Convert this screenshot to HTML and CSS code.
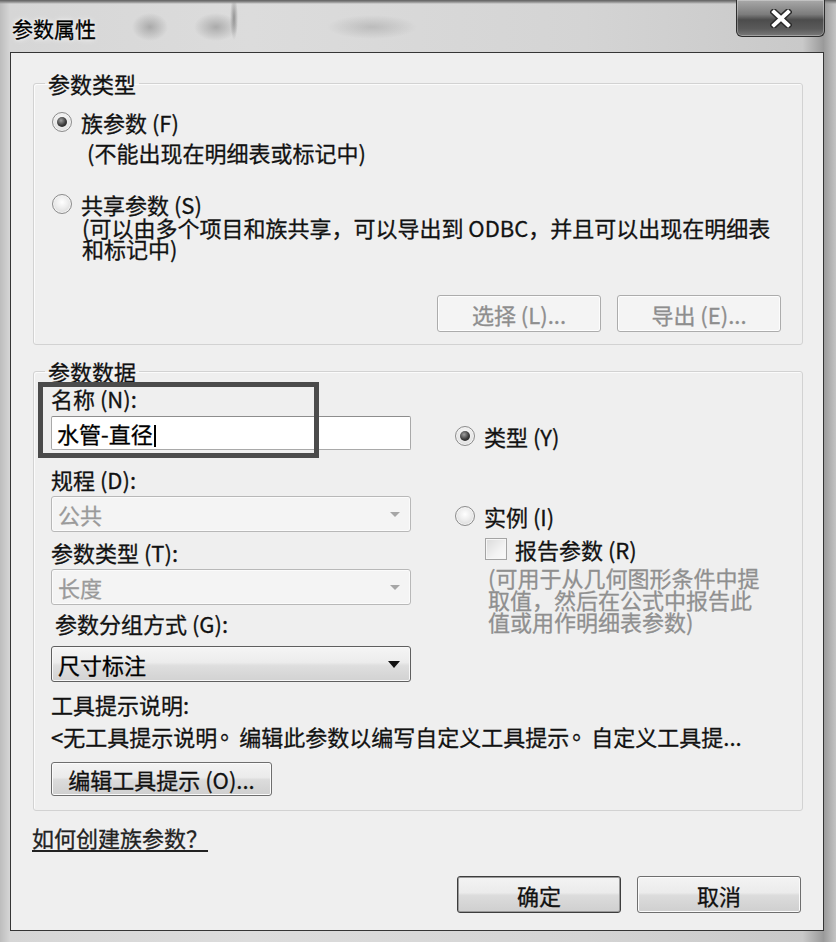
FILE: index.html
```html
<!DOCTYPE html>
<html lang="zh-CN">
<head>
<meta charset="utf-8">
<title>参数属性</title>
<link rel="stylesheet" href="styles.css">
</head>
<body>
<div class="window">
  <div class="titlebar">
    <span class="title">参数属性</span>
    <button class="close" aria-label="关闭">
      <svg width="22" height="19" viewBox="0 0 22 19" aria-hidden="true">
        <path d="M4 3 L18 16 M18 3 L4 16" stroke="#2a2a2a" stroke-width="7" stroke-linecap="square" fill="none"/>
        <path d="M4 3 L18 16 M18 3 L4 16" stroke="#ffffff" stroke-width="4" stroke-linecap="square" fill="none"/>
      </svg>
    </button>
  </div>
  <div class="client">
    <fieldset class="group group-type">
      <legend>参数类型</legend>
      <label class="radio-row"><span class="radio checked"></span>族参数 (F)</label>
      <div class="desc desc-family">(不能出现在明细表或标记中)</div>
      <label class="radio-row row-shared"><span class="radio"></span>共享参数 (S)</label>
      <div class="desc desc-shared">(可以由多个项目和族共享，可以导出到 ODBC，并且可以出现在明细表<br>和标记中)</div>
      <div class="group-buttons">
        <button class="btn disabled">选择 (L)...</button>
        <button class="btn disabled">导出 (E)...</button>
      </div>
    </fieldset>

    <fieldset class="group group-data">
      <legend>参数数据</legend>
      <div class="data-grid">
        <div class="fields">
          <div class="name-field">
            <div class="label">名称 (N):</div>
            <div class="input">水管-直径<span class="caret"></span></div>
            <div class="annot"></div>
          </div>
          <div class="label l-discipline">规程 (D):</div>
          <div class="select disabled">公共<span class="arrow"></span></div>
          <div class="label l-ptype">参数类型 (T):</div>
          <div class="select disabled">长度<span class="arrow"></span></div>
          <div class="label l-group">参数分组方式 (G):</div>
          <div class="select active">尺寸标注<span class="arrow"></span></div>
        </div>
        <div class="scope">
          <label class="radio-row r-type"><span class="radio checked"></span>类型 (Y)</label>
          <label class="radio-row r-inst"><span class="radio"></span>实例 (I)</label>
          <label class="check-row"><span class="checkbox"></span>报告参数 (R)</label>
          <div class="note">(可用于从几何图形条件中提<br>取值，然后在公式中报告此<br>值或用作明细表参数)</div>
        </div>
      </div>
      <div class="label l-tooltip">工具提示说明:</div>
      <div class="tooltip-text">&lt;无工具提示说明<span class="stop">。</span>编辑此参数以编写自定义工具提示<span class="stop">。</span>自定义工具提...</div>
      <button class="btn btn-edit">编辑工具提示 (O)...</button>
    </fieldset>

    <a class="help-link" href="#">如何创建族参数？</a>

    <div class="dialog-buttons">
      <button class="btn btn-default">确定</button>
      <button class="btn">取消</button>
    </div>
  </div>
</div>
</body>
</html>
```

FILE: styles.css
```css
* { box-sizing: border-box; }

html, body { margin: 0; padding: 0; }

body {
  width: 836px;
  height: 942px;
  overflow: hidden;
  font-family: "Noto Sans CJK SC", "Noto Sans", sans-serif;
  font-size: 22px;
  color: #121212;
  -webkit-text-stroke: 0.3px currentColor;
  background:
    linear-gradient(to bottom, #5e5e5e 0, #8e8e8e 2px, rgba(0,0,0,0) 4px),
    radial-gradient(ellipse 18px 14px at 150px 27px, rgba(80,80,80,.35), rgba(0,0,0,0)),
    radial-gradient(ellipse 22px 14px at 216px 27px, rgba(80,80,80,.35), rgba(0,0,0,0)),
    radial-gradient(ellipse 4px 22px at 234px 18px, rgba(60,60,60,.45), rgba(0,0,0,0)),
    radial-gradient(ellipse 45px 12px at 372px 27px, rgba(100,100,100,.25), rgba(0,0,0,0)),
    linear-gradient(to right, #bdbdbd 0, #d6d6d6 10px, #dcdcdc 30%, #d4d4d4 70%, #c9c9c9 96%, #9a9a9a 98.5%, #c4c4c4 100%);
}

.window {
  height: 942px;
  display: flex;
  flex-direction: column;
  padding: 0 12px 11px 10px;
}

.titlebar {
  flex: none;
  height: 52px;
  display: flex;
  justify-content: space-between;
  align-items: flex-start;
}

.title {
  margin: 16px 0 0 2px;
  font-size: 21px;
  line-height: 24px;
  color: #000;
  text-shadow: 0 0 6px #fff, 0 0 3px #fff;
}

.close {
  width: 89px;
  height: 37px;
  margin-right: -1px;
  padding: 0;
  border: 1px solid #2e2e2e;
  border-top: none;
  border-radius: 0 0 6px 6px;
  background: linear-gradient(to bottom, #a9a9a9 0, #7c7c7c 40%, #4c4c4c 55%, #5a5a5a 80%, #7a7a7a 100%);
  box-shadow: inset 0 0 0 1px rgba(255,255,255,.3);
  display: flex;
  align-items: center;
  justify-content: center;
}

.client {
  flex: 1;
  display: flex;
  flex-direction: column;
  border: 1px solid #353535;
  background: #efefef;
  padding: 0 20px 17px 22px;
}

/* group boxes */
.group {
  margin: 0;
  border: 1px solid #d2d2d2;
  border-radius: 3px;
  box-shadow: inset 1px 1px 0 #fbfbfb;
  min-width: 0;
}

.group legend {
  line-height: 24px;
  padding: 0 3px;
  color: #111;
}

.group-type {
  margin-top: 18px;
  padding: 15px 20px 12px 18px;
}
.group-type legend { margin-left: -7px; }

.group-data {
  margin-top: 14px;
  padding: 3px 20px 14px 17px;
}
.group-data legend { margin-left: -6px; }

.radio-row {
  display: flex;
  align-items: center;
  height: 24px;
  line-height: 24px;
  white-space: pre;
}

.radio {
  flex: none;
  position: relative;
  width: 20px;
  height: 20px;
  margin-right: 9px;
  border-radius: 50%;
  border: 1px solid #8c8c8c;
  background: radial-gradient(circle at 50% 40%, #ffffff 0, #ececec 45%, #cfcfcf 100%);
  box-shadow: inset 0 0 0 1px #f4f4f4;
}

.radio.checked::after {
  content: "";
  position: absolute;
  inset: 4px;
  border-radius: 50%;
  background: radial-gradient(circle at 40% 35%, #a0a0a0 0, #3a3a3a 55%, #1a1a1a 100%);
}

.desc { line-height: 24px; }
.desc-family { margin-top: 6px; padding-left: 35px; }
.row-shared { margin-top: 28px; }
.desc-shared { padding-left: 30px; line-height: 21px; margin-top: 1px; }

.group-buttons {
  margin-top: 36px;
  display: flex;
  justify-content: flex-end;
  gap: 16px;
  padding-right: 1px;
}

/* buttons */
.btn {
  width: 164px;
  height: 37px;
  padding: 0;
  font: inherit;
  font-size: 22px;
  line-height: 24px;
  color: #111;
  border: 1px solid #6e6e6e;
  border-radius: 3px;
  background: linear-gradient(to bottom, #f3f3f3 0, #ebebeb 45%, #dcdcdc 52%, #cfcfcf 100%);
  box-shadow: inset 0 0 0 1px #fbfbfb;
  white-space: pre;
}

.btn.disabled {
  color: #8e8e8e;
  border-color: #acacac;
  background: #f4f4f4;
  box-shadow: inset 0 0 0 1px #fdfdfd;
}

.btn-default {
  border-color: #3d3d3d;
  box-shadow: inset 0 0 0 1px #9a9a9a;
}

/* data group */
.data-grid {
  display: grid;
  grid-template-columns: 360px 1fr;
  column-gap: 44px;
}

.fields { display: flex; flex-direction: column; }

.name-field { position: relative; }

.label { line-height: 24px; white-space: pre; }

.input {
  margin-top: 6px;
  height: 34px;
  line-height: 32px;
  padding-left: 5px;
  background: #fff;
  border: 1px solid #a9a9a9;
  border-top-color: #8d8d8d;
  border-radius: 2px;
  color: #000;
}

.caret {
  display: inline-block;
  width: 2px;
  height: 22px;
  margin-left: 1px;
  vertical-align: -4px;
  background: #000;
}

.annot {
  position: absolute;
  left: -13px;
  top: -4px;
  width: 281px;
  height: 76px;
  border: 5px solid #4b4b4b;
}

.l-discipline { margin-top: 17px; }
.l-ptype { margin-top: 8px; }
.l-group { margin-top: 6px; padding-left: 4px; }

.select {
  margin-top: 5px;
  height: 36px;
  display: flex;
  align-items: center;
  justify-content: space-between;
  padding: 0 10px 0 6px;
  border-radius: 3px;
  line-height: 24px;
}

.select.disabled {
  color: #9a9a9a;
  background: #f4f4f4;
  border: 1px solid #b8b8b8;
  box-shadow: inset 0 0 0 1px #fbfbfb;
}

.select.disabled .arrow {
  width: 0;
  height: 0;
  border-left: 5px solid transparent;
  border-right: 5px solid transparent;
  border-top: 5px solid #a6a6a6;
}

.select.active {
  margin-top: 11px;
  color: #000;
  border: 1px solid #5f5f5f;
  background: linear-gradient(to bottom, #f5f5f5 0, #ececec 45%, #dedede 55%, #d2d2d2 100%);
  box-shadow: inset 0 0 0 1px #f8f8f8;
}

.select.active .arrow {
  width: 0;
  height: 0;
  border-left: 6px solid transparent;
  border-right: 6px solid transparent;
  border-top: 7px solid #111;
}

.scope { display: flex; flex-direction: column; }
.r-type { margin-top: 38px; }
.r-inst { margin-top: 56px; }

.check-row {
  margin-top: 9px;
  padding-left: 30px;
  display: flex;
  align-items: center;
  height: 24px;
  line-height: 24px;
  white-space: pre;
}

.checkbox {
  flex: none;
  width: 22px;
  height: 22px;
  margin-right: 8px;
  border: 1px solid #a4a4a4;
  background: linear-gradient(135deg, #dadada 0, #f2f2f2 60%, #fafafa 100%);
  box-shadow: inset 0 0 0 1px #f6f6f6;
}

.note {
  margin-top: 5px;
  padding-left: 33px;
  line-height: 22px;
  color: #8f8f8f;
}

.l-tooltip { margin-top: 10px; }

.tooltip-text {
  margin-top: 8px;
  line-height: 24px;
  white-space: nowrap;
}

.stop {
  position: relative;
  top: -7px;
  left: 3px;
}

.btn-edit {
  margin-top: 14px;
  width: 221px;
  height: 34px;
  display: block;
}

.help-link {
  align-self: flex-start;
  margin-top: 14px;
  margin-left: -1px;
  line-height: 24px;
  color: #222;
  text-decoration: underline;
  text-underline-offset: 3px;
}

.dialog-buttons {
  margin-top: auto;
  display: flex;
  justify-content: flex-end;
  gap: 16px;
  padding-right: 2px;
}
```
